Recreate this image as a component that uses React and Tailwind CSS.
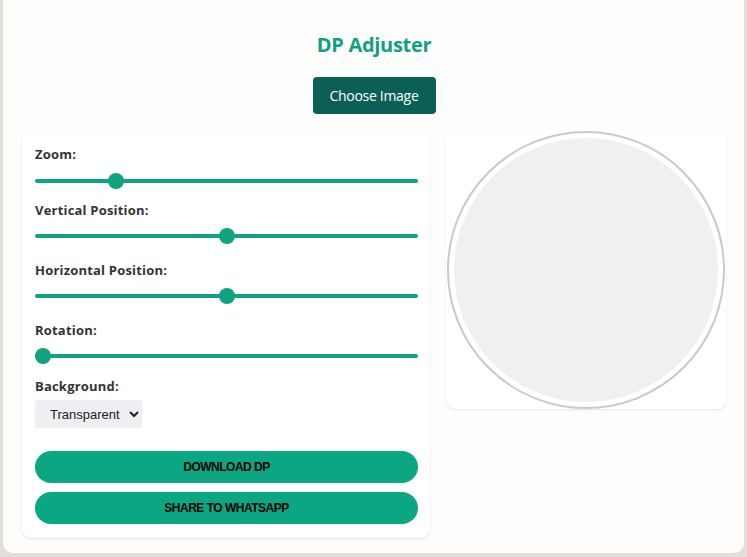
import { useState } from "react";

function Slider({ label, value, className = "" }) {
  return (
    <div className={className}>
      <div className="h-[18px] text-[13px] leading-[18px] font-bold text-[#333] tracking-[0.2px]">{label}</div>
      <div className="relative h-4 mt-[9px]">
        <div className="absolute left-0 right-0 top-[6px] h-1 rounded-full bg-[#10a37f]" />
        <div
          className="absolute top-0 h-4 w-4 rounded-full bg-[#10a37f]"
          style={{ left: `calc(${value} * (100% - 16px))` }}
        />
      </div>
    </div>
  );
}

export default function App() {
  const [bg, setBg] = useState("transparent");

  return (
    <div className="min-h-[557px] bg-[#e3ded7] px-[3px] pb-[4px] font-['Open_Sans',sans-serif]">
      <div className="min-h-[553px] bg-[#fdfdfb] rounded-b-[10px] pl-[19px] pr-[18px] pt-[31px] pb-[15px]">
        <h1 className="text-center text-[20px] leading-[28px] font-bold text-[#0fa17e] tracking-[-0.3px]">
          DP Adjuster
        </h1>
        <div className="flex justify-center mt-[18px]">
          <button className="h-[37px] w-[123px] rounded-[4px] bg-[#0b5f54] text-white text-[14px] tracking-[-0.3px]">
            Choose Image
          </button>
        </div>

        <div className="flex items-start gap-4 mt-4">
          <div className="w-[408px] shrink-0 bg-white rounded-[9px] shadow-[0_1px_2px_rgba(0,0,0,0.12)] pl-[13px] pr-[12px] pt-[15px] pb-[14px]">
            <div className="h-[18px] text-[13px] leading-[18px] font-bold text-[#333] tracking-[0.2px]">Zoom:</div>
            <div className="relative h-4 mt-[10px]">
              <div className="absolute left-0 right-0 top-[6px] h-1 rounded-full bg-[#10a37f]" />
              <div className="absolute top-0 h-4 w-4 rounded-full bg-[#10a37f]" style={{ left: "calc(0.2 * (100% - 16px))" }} />
            </div>
            <Slider label="Vertical Position:" value={0.5} className="mt-3" />
            <Slider label="Horizontal Position:" value={0.5} className="mt-[17px]" />
            <Slider label="Rotation:" value={0} className="mt-[17px]" />

            <div className="mt-[13px] h-[18px] text-[13px] leading-[18px] font-bold text-[#333] tracking-[0.2px]">Background:</div>
            <select
              value={bg}
              onChange={(e) => setBg(e.target.value)}
              className="mt-[5px] h-7 w-[107px] pl-[11px] rounded-[3px] bg-[#efeff3] text-[13px] text-[#222] font-['Liberation_Sans',sans-serif] outline-none"
            >
              <option value="transparent">Transparent</option>
              <option value="white">White</option>
              <option value="black">Black</option>
            </select>

            <button className="mt-[23px] w-full h-8 rounded-full bg-[#0ba782] text-black text-[12px] font-bold tracking-[-0.5px] font-['Liberation_Sans',sans-serif]">
              DOWNLOAD DP
            </button>
            <button className="mt-[9px] w-full h-8 rounded-full bg-[#0ba782] text-black text-[12px] font-bold tracking-[-0.5px] font-['Liberation_Sans',sans-serif]">
              SHARE TO WHATSAPP
            </button>
          </div>

          <div className="w-[280px] shrink-0 h-[279px] bg-white rounded-[9px] shadow-[0_1px_2px_rgba(0,0,0,0.1)] flex items-center justify-center">
            <div className="w-[278px] h-[278px] rounded-full border-2 border-[#c9c9c9] bg-white p-[5px]">
              <div className="w-full h-full rounded-full bg-[#f0f0f0]" />
            </div>
          </div>
        </div>
      </div>
    </div>
  );
}
